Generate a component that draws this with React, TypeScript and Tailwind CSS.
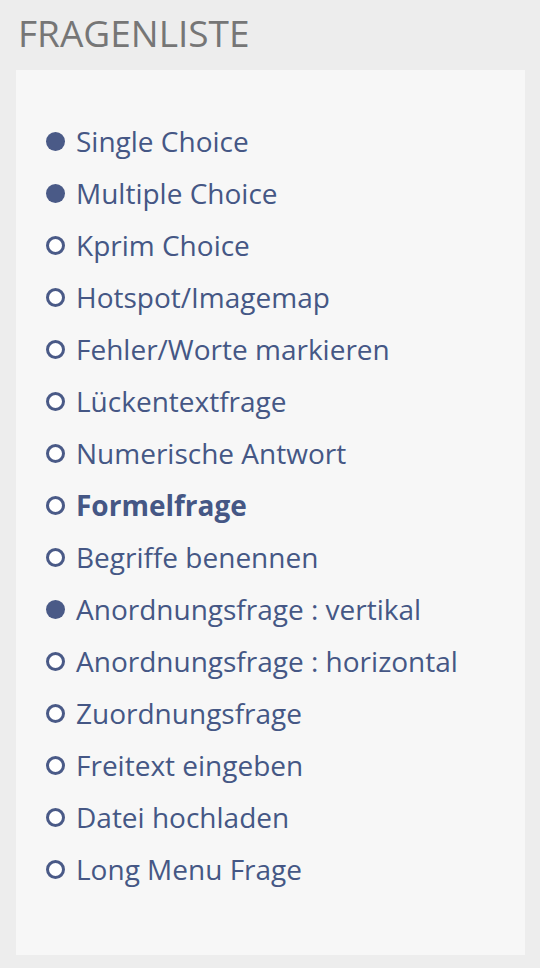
import React from "react";

const items: { label: string; filled: boolean; bold?: boolean }[] = [
  { label: "Single Choice", filled: true },
  { label: "Multiple Choice", filled: true },
  { label: "Kprim Choice", filled: false },
  { label: "Hotspot/Imagemap", filled: false },
  { label: "Fehler/Worte markieren", filled: false },
  { label: "Lückentextfrage", filled: false },
  { label: "Numerische Antwort", filled: false },
  { label: "Formelfrage", filled: false, bold: true },
  { label: "Begriffe benennen", filled: false },
  { label: "Anordnungsfrage : vertikal", filled: true },
  { label: "Anordnungsfrage : horizontal", filled: false },
  { label: "Zuordnungsfrage", filled: false },
  { label: "Freitext eingeben", filled: false },
  { label: "Datei hochladen", filled: false },
  { label: "Long Menu Frage", filled: false },
];

export default function App() {
  return (
    <div
      className="w-[540px] h-[968px] bg-[#ededed] pl-[16px] pr-[15px]"
      style={{ fontFamily: '"Open Sans", "Noto Sans", sans-serif' }}
    >
      <div className="h-[70px] pt-[7px] pl-[2px]">
        <h1 className="text-[37px] leading-[52px] text-[#767676] font-normal">FRAGENLISTE</h1>
      </div>
      <div className="w-[509px] h-[885px] bg-[#f7f7f7] pl-[30px] pt-[45px]">
        <ul className="flex flex-col">
          {items.map((it) => (
            <li key={it.label} className="flex items-center h-[52px] gap-[11px]">
              {it.filled ? (
                <span className="w-[19px] h-[19px] rounded-full bg-[#4a5a87] shrink-0" />
              ) : (
                <span className="w-[19px] h-[19px] rounded-full border-[3px] border-[#4a5a87] bg-white shrink-0" />
              )}
              <span
                className={`text-[28px] leading-[52px] text-[#455785] ${it.bold ? "font-bold" : "font-normal"}`}
              >
                {it.label}
              </span>
            </li>
          ))}
        </ul>
      </div>
    </div>
  );
}
